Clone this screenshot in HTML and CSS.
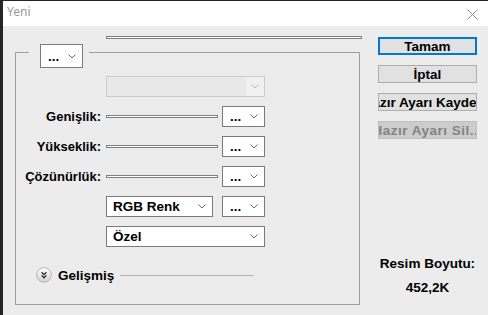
FILE: index.html
```html
<!DOCTYPE html>
<html lang="tr">
<head>
  <meta charset="UTF-8" />
  <title>Yeni</title>
  <link rel="stylesheet" href="styles.css">
</head>
<body>
  <div class="window">
    <div class="titlebar">
      <span class="title">Yeni</span>
      <svg class="close" width="11" height="11" viewBox="0 0 11 11">
        <path d="M0.5 0.5 L10.5 10.5 M10.5 0.5 L0.5 10.5" stroke="#8a8a8a" stroke-width="1" fill="none"/>
      </svg>
    </div>

    <div class="content">
      <div class="main">
        <div class="preset-name"></div>
        <fieldset class="group">
          <legend>
            <div class="combo combo-top">
              <span>...</span>
              <svg class="chev" width="8" height="5" viewBox="0 0 8 5"><polyline points="0.5,0.5 4,4 7.5,0.5"/></svg>
            </div>
          </legend>

          <div class="fields">
            <div class="combo disabled wide">
              <span></span>
              <span class="chev-box"><svg class="chev" width="8" height="5" viewBox="0 0 8 5"><polyline points="0.5,0.5 4,4 7.5,0.5"/></svg></span>
            </div>

            <label>Genişlik:</label>
            <div class="slider"></div>
            <div class="combo"><span>...</span><svg class="chev" width="8" height="5" viewBox="0 0 8 5"><polyline points="0.5,0.5 4,4 7.5,0.5"/></svg></div>

            <label>Yükseklik:</label>
            <div class="slider"></div>
            <div class="combo"><span>...</span><svg class="chev" width="8" height="5" viewBox="0 0 8 5"><polyline points="0.5,0.5 4,4 7.5,0.5"/></svg></div>

            <label>Çözünürlük:</label>
            <div class="slider"></div>
            <div class="combo"><span>...</span><svg class="chev" width="8" height="5" viewBox="0 0 8 5"><polyline points="0.5,0.5 4,4 7.5,0.5"/></svg></div>

            <div class="combo mode"><span>RGB Renk</span><svg class="chev" width="8" height="5" viewBox="0 0 8 5"><polyline points="0.5,0.5 4,4 7.5,0.5"/></svg></div>
            <div class="combo"><span>...</span><svg class="chev" width="8" height="5" viewBox="0 0 8 5"><polyline points="0.5,0.5 4,4 7.5,0.5"/></svg></div>

            <div class="combo wide"><span>Özel</span><svg class="chev" width="8" height="5" viewBox="0 0 8 5"><polyline points="0.5,0.5 4,4 7.5,0.5"/></svg></div>
          </div>

          <div class="advanced">
            <svg width="16" height="16" viewBox="0 0 16 16">
              <defs>
                <linearGradient id="knob" x1="0" y1="0" x2="0" y2="1">
                  <stop offset="0" stop-color="#ffffff"/>
                  <stop offset="1" stop-color="#d2d2d2"/>
                </linearGradient>
              </defs>
              <circle cx="8" cy="8" r="7.3" fill="url(#knob)" stroke="#b4b4b4"/>
              <path d="M5.6 5.2 L8 7.6 L10.4 5.2 M5.6 8.4 L8 10.8 L10.4 8.4" fill="none" stroke="#2a2a2a" stroke-width="1.3"/>
            </svg>
            <span>Gelişmiş</span>
            <div class="rule"></div>
          </div>
        </fieldset>
      </div>

      <div class="side">
        <div class="buttons">
          <button class="btn default"><span>Tamam</span></button>
          <button class="btn"><span>İptal</span></button>
          <button class="btn"><span>Hazır Ayarı Kaydet...</span></button>
          <button class="btn" disabled><span>Hazır Ayarı Sil...</span></button>
        </div>
        <div class="size">
          <div>Resim Boyutu:</div>
          <div>452,2K</div>
        </div>
      </div>
    </div>
  </div>
</body>
</html>
```

FILE: styles.css
```css
body {
  margin: 0;
  background-color: #262626;
  font-family: "Liberation Sans", Arial, sans-serif;
  overflow: hidden;
}
.window {
  margin: 1px 0 0 3px;
  height: 314px;
  background-color: #ececec;
}
.titlebar {
  height: 25px;
  background-color: #fff;
  display: flex;
  justify-content: space-between;
  align-items: flex-start;
}
.title {
  padding: 3px 0 0 4px;
  line-height: 16px;
  font-family: "Noto Sans", sans-serif;
  font-size: 12px;
  color: #9a9a9a;
}
.close {
  margin: 8px 10px 0 0;
}
.content {
  display: flex;
  padding: 10px 0 0 12px;
}
.main {
  width: 345px;
}
.preset-name {
  box-sizing: border-box;
  margin-left: 91px;
  width: 256px;
  height: 3px;
  border: 1px solid #808080;
  background: #fff;
}
.group {
  box-sizing: border-box;
  width: 345px;
  margin: -3px 0 0 0;
  padding: 8px 0 21px 0;
  border: 1px solid #a0a0a0;
  min-width: 0;
}
.group legend {
  margin-left: 13px;
  padding: 8px 6px 0 11px;
}
.combo {
  box-sizing: border-box;
  height: 21px;
  display: flex;
  align-items: center;
  justify-content: space-between;
  padding: 0 6px 0 7px;
  background: #fff;
  border: 1px solid #7a7a7a;
  font-size: 13.5px;
  font-weight: bold;
  color: #000;
}
.combo-top {
  width: 43px;
  height: 24px;
}
.chev {
  display: block;
  fill: none;
  stroke: #6a6a6a;
  stroke-width: 1;
}
.combo.disabled {
  padding: 0;
  background: #e8e8e8;
  border-color: #cccccc;
}
.chev-box {
  width: 18px;
  height: 100%;
  display: flex;
  align-items: center;
  justify-content: center;
  background: #f0f0f0;
}
.combo.disabled .chev {
  stroke: #b8b8b8;
}
.fields {
  display: grid;
  grid-template-columns: 86px 112px 43px;
  grid-auto-rows: 21px;
  column-gap: 4px;
  row-gap: 9px;
}
.fields label {
  grid-column: 1;
  align-self: center;
  text-align: right;
  padding-right: 1px;
  font-size: 13px;
  font-weight: bold;
  color: #000;
}
.wide {
  grid-column: 2 / 4;
  padding-left: 6px;
}
.mode {
  grid-column: 2;
  width: 107px;
  padding-left: 6px;
}
.slider {
  box-sizing: border-box;
  align-self: center;
  height: 3px;
  border: 1px solid #808080;
  background: #fff;
}
.advanced {
  display: flex;
  align-items: center;
  height: 16px;
  margin: 20px 0 0 20px;
  font-size: 13.5px;
  font-weight: bold;
}
.advanced svg {
  display: block;
  margin-right: 6px;
}
.rule {
  width: 134px;
  height: 1px;
  margin-left: 6px;
  background: #b4b4b4;
}
.side {
  width: 99px;
  margin-left: 18px;
  padding-top: 1px;
}
.buttons {
  display: flex;
  flex-direction: column;
  gap: 10px;
}
.btn {
  box-sizing: border-box;
  width: 99px;
  height: 18px;
  padding: 0;
  display: flex;
  align-items: center;
  justify-content: center;
  overflow: hidden;
  white-space: nowrap;
  background: #e1e1e1;
  border: 1px solid #adadad;
  font-family: "Liberation Sans", Arial, sans-serif;
  font-size: 13.5px;
  font-weight: bold;
  color: #000;
}
.btn span {
  flex-shrink: 0;
}
.btn.default {
  border: 2px solid #0078d7;
}
.btn:disabled {
  background: #cccccc;
  border-color: #bfbfbf;
  color: #838383;
  letter-spacing: 0.5px;
}
.size {
  margin-top: 113px;
  text-align: center;
  line-height: 24px;
  font-size: 13.5px;
  font-weight: bold;
  color: #000;
}
```
